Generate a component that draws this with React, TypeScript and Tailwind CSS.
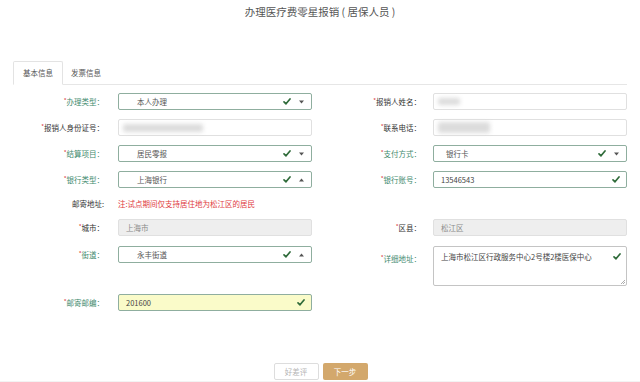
import React from "react";

const GREEN = "text-[#3f8a6e]";

function Check() {
  return (
    <svg width="8" height="7" viewBox="0 0 8 7" className="shrink-0">
      <path d="M1 3.8 L3 5.8 L7 1" fill="none" stroke="#2f6b3a" strokeWidth="1.7" strokeLinecap="round" strokeLinejoin="round" />
    </svg>
  );
}

function Caret({ up }: { up?: boolean }) {
  return (
    <svg width="5" height="4" viewBox="0 0 5 4" className="shrink-0">
      {up ? <path d="M0 3.5 L2.5 0.5 L5 3.5 Z" fill="#555" /> : <path d="M0 0.5 L2.5 3.5 L5 0.5 Z" fill="#555" />}
    </svg>
  );
}

function Label({ text, ok, w }: { text: string; ok?: boolean; w: string }) {
  return (
    <div className={`${w} h-[17px] shrink-0 flex items-center justify-end text-[7.5px] leading-none ${ok ? GREEN : "text-[#333]"}`}>
      <span className="text-[#d9363e] text-[6px] self-start mt-[5px]">*</span>
      <span>{text}</span>
      <span>：</span>
    </div>
  );
}

function Select({ value, up, pl = "pl-[18px]" }: { value: string; up?: boolean; pl?: string }) {
  return (
    <div className={`w-[194px] h-[17px] border border-[#8fae9f] rounded-[2px] bg-white flex items-center ${pl} pr-[7px] text-[7.5px] leading-none text-[#555]`}>
      <span className="flex-1">{value}</span>
      <Check />
      <span className="ml-[8px] flex"><Caret up={up} /></span>
    </div>
  );
}

function Input({ children, ok, disabled, yellow }: { children?: React.ReactNode; ok?: boolean; disabled?: boolean; yellow?: boolean }) {
  const border = ok ? "border-[#8fae9f]" : "border-[#e0e0e0]";
  const bg = disabled ? "bg-[#eeeeee]" : yellow ? "bg-[#fafbc9]" : "bg-white";
  return (
    <div className={`w-[194px] h-[17px] border ${border} ${bg} rounded-[2px] flex items-center pl-[7px] pr-[6px] text-[7.5px] leading-none ${disabled ? "text-[#8a8a8a]" : "text-[#444]"}`}>
      <div className="flex-1 flex items-center">{children}</div>
      {ok && <Check />}
    </div>
  );
}

function Blur({ w, h, ml = "ml-[0px]" }: { w: string; h: string; ml?: string }) {
  return <div className={`${w} ${h} ${ml} bg-[#dcdcdc] blur-[2px] rounded-[2px]`} />;
}

function Row({ left, right, h = "h-[17px]" }: { left?: React.ReactNode; right?: React.ReactNode; h?: string }) {
  return (
    <div className={`flex ${h}`}>
      <div className="w-[320px] flex items-start">{left}</div>
      <div className="w-[320px] flex items-start">{right}</div>
    </div>
  );
}

export default function App() {
  return (
    <div className="w-[640px] h-[382px] bg-white overflow-hidden flex flex-col font-['Noto_Sans_CJK_SC','Noto_Sans',sans-serif]">
      <div className="h-[24px] flex items-center justify-center text-[10.5px] leading-none text-[#555]">
        办理医疗费零星报销 ( 居保人员 )
      </div>

      <div className="mt-[37px] mx-[13px] h-[24px] flex border-b border-[#e6e6e6]">
        <div className="h-[24px] px-[9px] border border-[#e3e3e3] border-b-white bg-white rounded-t-[2px] flex items-center text-[7.5px] leading-none text-[#555]">
          基本信息
        </div>
        <div className="h-[24px] px-[8px] flex items-center text-[7.5px] leading-none text-[#555]">发票信息</div>
      </div>

      <div className="mt-[8px] flex flex-col gap-[9px]">
        <Row
          left={<><Label w="w-[104px]" ok text="办理类型" /><div className="ml-[14px]"><Select value="本人办理" /></div></>}
          right={<><Label w="w-[101px]" text="报销人姓名" /><div className="ml-[12px]"><Input><Blur w="w-[22px]" h="h-[7px]" ml="ml-[-3px]" /></Input></div></>}
        />
        <Row
          left={<><Label w="w-[104px]" text="报销人身份证号" /><div className="ml-[14px]"><Input><Blur w="w-[80px]" h="h-[8px]" ml="ml-[-3px]" /></Input></div></>}
          right={<><Label w="w-[101px]" text="联系电话" /><div className="ml-[12px]"><Input><Blur w="w-[52px]" h="h-[11px]" ml="ml-[-3px]" /></Input></div></>}
        />
        <Row
          left={<><Label w="w-[104px]" ok text="结算项目" /><div className="ml-[14px]"><Select value="居民零报" /></div></>}
          right={<><Label w="w-[101px]" ok text="支付方式" /><div className="ml-[12px]"><Select value="银行卡" pl="pl-[12px]" /></div></>}
        />
        <Row
          left={<><Label w="w-[104px]" ok text="银行类型" /><div className="ml-[14px]"><Select value="上海银行" up /></div></>}
          right={<><Label w="w-[101px]" ok text="银行账号" /><div className="ml-[12px]"><Input ok>13546543</Input></div></>}
        />
        <div className="flex h-[13px] items-center">
          <div className="w-[104px] flex justify-end text-[7.5px] leading-none text-[#333]">邮寄地址:</div>
          <div className="ml-[14px] text-[7.5px] leading-none text-[#e0393c]">注:试点期间仅支持居住地为松江区的居民</div>
        </div>
        <Row
          h="h-[18px]"
          left={<><Label w="w-[104px]" text="城市" /><div className="ml-[14px]"><div className="h-[18px] flex"><Input disabled>上海市</Input></div></div></>}
          right={<><Label w="w-[101px]" text="区县" /><div className="ml-[12px]"><div className="h-[18px] flex"><Input disabled>松江区</Input></div></div></>}
        />
        <Row
          h="h-[40px]"
          left={<><Label w="w-[104px]" ok text="街道" /><div className="ml-[14px]"><Select value="永丰街道" up /></div></>}
          right={<>
            <div className="mt-[4px]"><Label w="w-[101px]" ok text="详细地址" /></div>
            <div className="ml-[12px] relative w-[194px] h-[40px] border border-[#c4c4c4] rounded-[2px] bg-white pl-[7px] pt-[5px] text-[7.5px] leading-[9px] text-[#444]">
              上海市松江区行政服务中心2号楼2楼医保中心
              <div className="absolute right-[5px] top-[6px]"><Check /></div>
              <svg className="absolute right-[1px] bottom-[1px]" width="5" height="5" viewBox="0 0 5 5">
                <path d="M5 1 L1 5 M5 3 L3 5" stroke="#999" strokeWidth="0.8" />
              </svg>
            </div>
          </>}
        />
        <div className="flex h-[18px] -mt-[1px]">
          <Label w="w-[104px]" ok text="邮寄邮编" />
          <div className="ml-[14px] h-[18px] flex"><Input ok yellow>201600</Input></div>
        </div>
      </div>

      <div className="mt-[51px] flex justify-center gap-[4px] pl-[1px]">
        <div className="w-[45px] h-[17px] border border-[#dddddd] rounded-[2px] bg-white flex items-center justify-center text-[7.5px] leading-none text-[#b5b5b5]">好差评</div>
        <div className="w-[45px] h-[17px] rounded-[2px] bg-[#d3a86c] flex items-center justify-center text-[7.5px] leading-none text-white">下一步</div>
      </div>
      <div className="flex-1 mt-[1px] bg-[#f3f3f3]" />
    </div>
  );
}
